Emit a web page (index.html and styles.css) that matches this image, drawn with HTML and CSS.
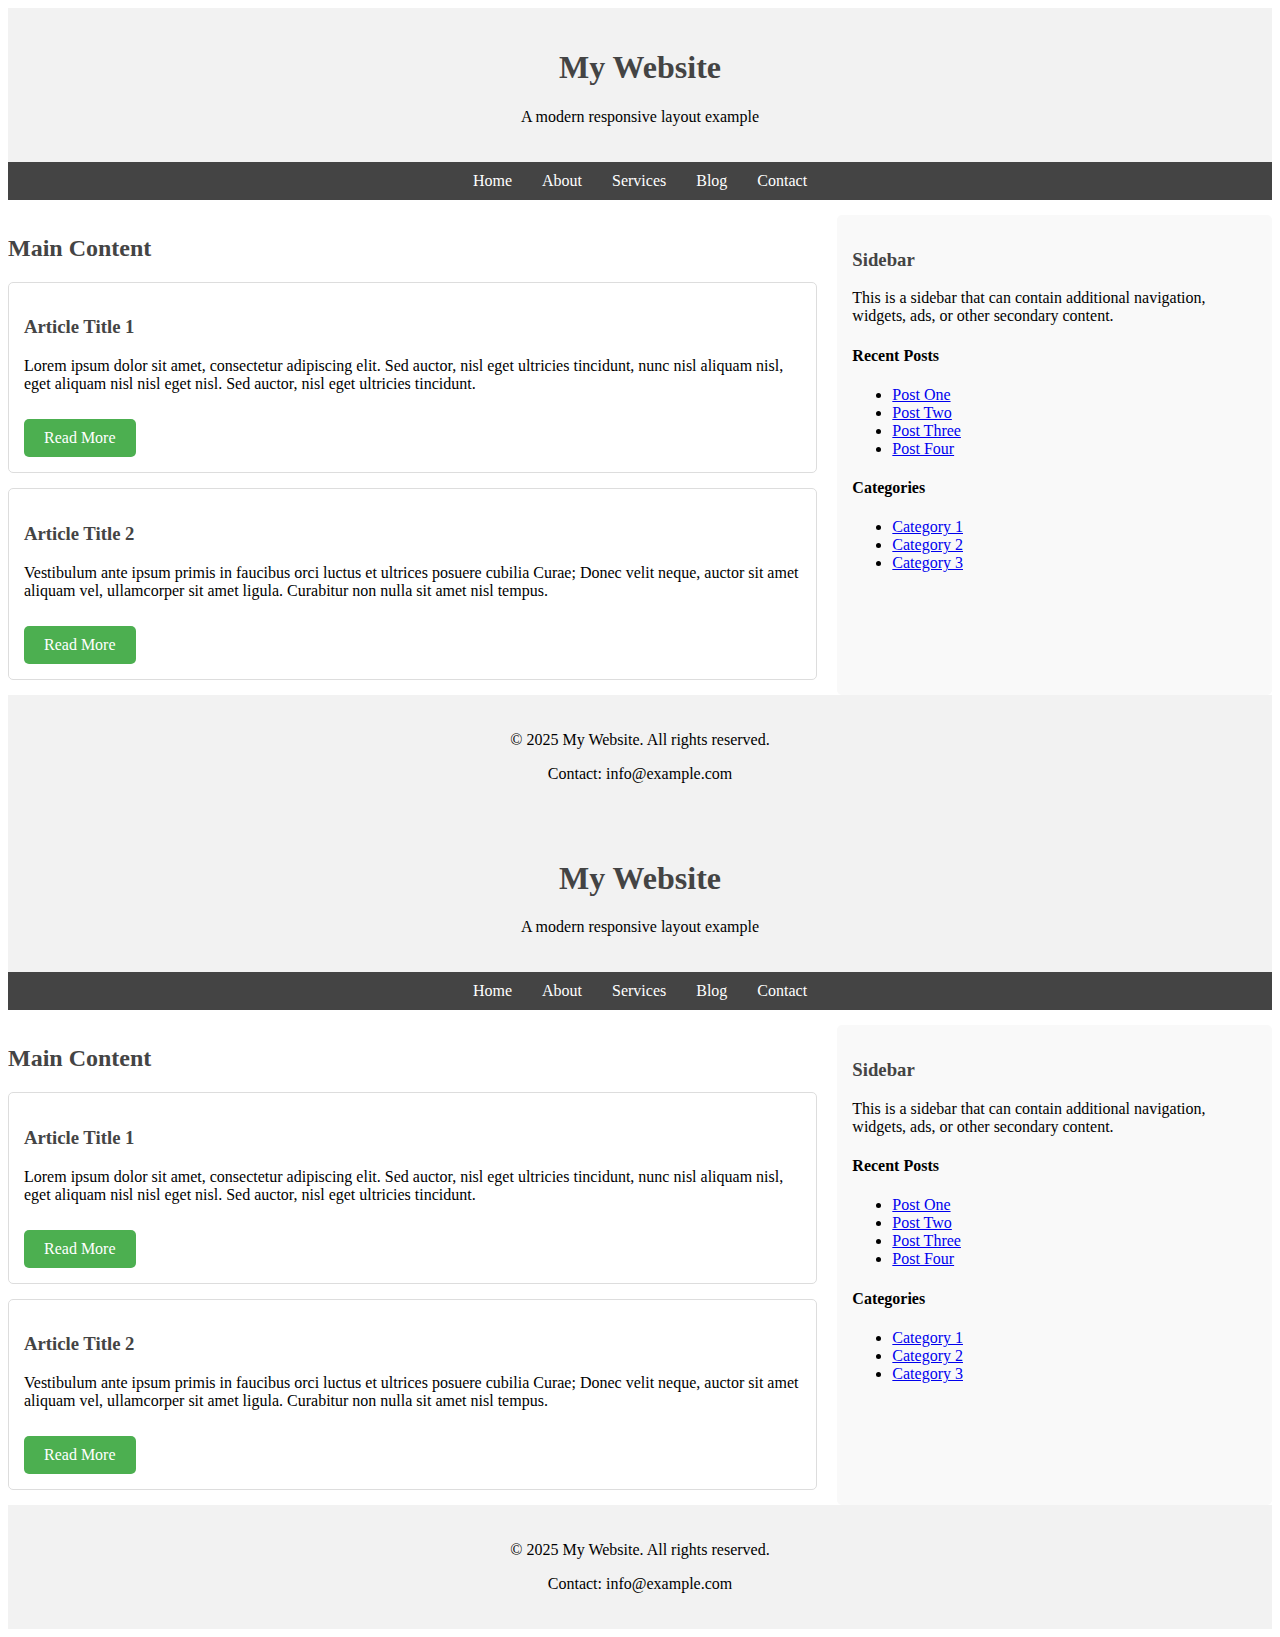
FILE: index.html
```html
<!DOCTYPE html>
<html lang="en">
<head>
<meta charset="utf-8">
<title>My Website</title>
<link rel="stylesheet" href="styles.css">
</head>
<body>
<header class="site-header">
  <h1>My Website</h1>
  <p>A modern responsive layout example</p>
</header>
<nav class="site-nav">
  <a href="#">Home</a>
  <a href="#">About</a>
  <a href="#">Services</a>
  <a href="#">Blog</a>
  <a href="#">Contact</a>
</nav>
<div class="container">
  <main class="main-content">
    <h2>Main Content</h2>
    <article class="card">
      <h3>Article Title 1</h3>
      <p>Lorem ipsum dolor sit amet, consectetur adipiscing elit. Sed auctor, nisl eget ultricies tincidunt, nunc nisl aliquam nisl, eget aliquam nisl nisl eget nisl. Sed auctor, nisl eget ultricies tincidunt.</p>
      <a href="#" class="btn">Read More</a>
    </article>
    <article class="card">
      <h3>Article Title 2</h3>
      <p>Vestibulum ante ipsum primis in faucibus orci luctus et ultrices posuere cubilia Curae; Donec velit neque, auctor sit amet aliquam vel, ullamcorper sit amet ligula. Curabitur non nulla sit amet nisl tempus.</p>
      <a href="#" class="btn">Read More</a>
    </article>
  </main>
  <aside class="sidebar">
    <h3>Sidebar</h3>
    <p>This is a sidebar that can contain additional navigation, widgets, ads, or other secondary content.</p>
    <h4>Recent Posts</h4>
    <ul>
      <li><a href="#">Post One</a></li>
      <li><a href="#">Post Two</a></li>
      <li><a href="#">Post Three</a></li>
      <li><a href="#">Post Four</a></li>
    </ul>
    <h4>Categories</h4>
    <ul>
      <li><a href="#">Category 1</a></li>
      <li><a href="#">Category 2</a></li>
      <li><a href="#">Category 3</a></li>
    </ul>
  </aside>
</div>
<footer class="site-footer">
  <p>&copy; 2025 My Website. All rights reserved.</p>
  <p>Contact: info@example.com</p>
</footer>
<header class="site-header">
  <h1>My Website</h1>
  <p>A modern responsive layout example</p>
</header>
<nav class="site-nav">
  <a href="#">Home</a>
  <a href="#">About</a>
  <a href="#">Services</a>
  <a href="#">Blog</a>
  <a href="#">Contact</a>
</nav>
<div class="container">
  <main class="main-content">
    <h2>Main Content</h2>
    <article class="card">
      <h3>Article Title 1</h3>
      <p>Lorem ipsum dolor sit amet, consectetur adipiscing elit. Sed auctor, nisl eget ultricies tincidunt, nunc nisl aliquam nisl, eget aliquam nisl nisl eget nisl. Sed auctor, nisl eget ultricies tincidunt.</p>
      <a href="#" class="btn">Read More</a>
    </article>
    <article class="card">
      <h3>Article Title 2</h3>
      <p>Vestibulum ante ipsum primis in faucibus orci luctus et ultrices posuere cubilia Curae; Donec velit neque, auctor sit amet aliquam vel, ullamcorper sit amet ligula. Curabitur non nulla sit amet nisl tempus.</p>
      <a href="#" class="btn">Read More</a>
    </article>
  </main>
  <aside class="sidebar">
    <h3>Sidebar</h3>
    <p>This is a sidebar that can contain additional navigation, widgets, ads, or other secondary content.</p>
    <h4>Recent Posts</h4>
    <ul>
      <li><a href="#">Post One</a></li>
      <li><a href="#">Post Two</a></li>
      <li><a href="#">Post Three</a></li>
      <li><a href="#">Post Four</a></li>
    </ul>
    <h4>Categories</h4>
    <ul>
      <li><a href="#">Category 1</a></li>
      <li><a href="#">Category 2</a></li>
      <li><a href="#">Category 3</a></li>
    </ul>
  </aside>
</div>
<footer class="site-footer">
  <p>&copy; 2025 My Website. All rights reserved.</p>
  <p>Contact: info@example.com</p>
</footer>
</body>
</html>
```

FILE: styles.css
```css
body {
  margin: 8px;
  font-family: "Liberation Serif", "Times New Roman", serif;
  font-size: 16px;
  color: #000;
}

h1, h2, h3 {
  color: #444;
}

.site-header {
  background: #f2f2f2;
  padding: 20px;
  text-align: center;
}

.site-nav {
  background: #444;
  padding: 10px;
  display: flex;
  justify-content: center;
  gap: 30px;
}

.site-nav a {
  color: #fff;
  text-decoration: none;
}

.container {
  display: flex;
  gap: 20px;
  padding-top: 15px;
}

.main-content {
  flex: 2;
}

.sidebar {
  flex: 1;
  background: #f9f9f9;
  padding: 15px;
  border-radius: 5px;
}

.card {
  background: #fff;
  border: 1px solid #ddd;
  border-radius: 5px;
  padding: 15px;
  margin-bottom: 15px;
}

.btn {
  display: inline-block;
  margin-top: 10px;
  background: #4caf50;
  color: #fff;
  text-decoration: none;
  padding: 10px 20px;
  border-radius: 5px;
}

.site-footer {
  background: #f2f2f2;
  padding: 20px;
  text-align: center;
}
```
